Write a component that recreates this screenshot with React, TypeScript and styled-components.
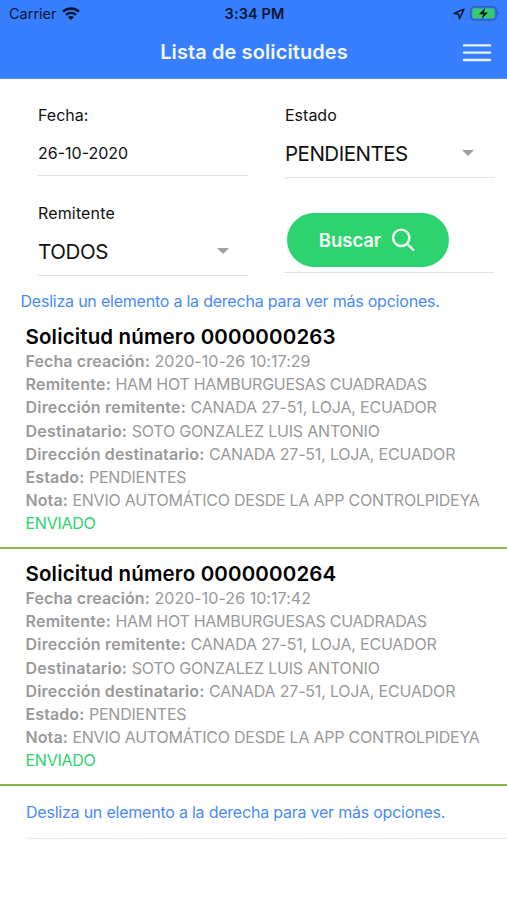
import React from "react";
import styled, { createGlobalStyle } from "styled-components";

const GlobalStyle = createGlobalStyle`
  * { box-sizing: border-box; }
  body { margin: 0; background: #fff; color: #111; font-family: Inter, "Liberation Sans", sans-serif; }
`;

const Screen = styled.main`
  width: 507px;
  height: 900px;
  overflow: hidden;
  background: #fff;
`;

const Header = styled.header`
  height: 79px;
  background: #387fff;
  border-bottom: 1px solid #4e8eff;
`;

const StatusBar = styled.div`
  height: 27px;
  display: grid;
  grid-template-columns: 1fr auto 1fr;
  align-items: center;
  padding: 0 7px 0 9px;
  color: #071430;
  svg { display: block; }
`;

const StatusGroup = styled.div<{ $end?: boolean }>`
  display: flex;
  align-items: center;
  justify-content: ${(p) => (p.$end ? "flex-end" : "flex-start")};
  gap: 5px;
`;

const Txt = styled.span<{ $size: number; $weight?: number; $space?: number; $color?: string }>`
  font-size: ${(p) => p.$size}px;
  font-weight: ${(p) => p.$weight ?? 400};
  letter-spacing: ${(p) => p.$space ?? 0}px;
  color: ${(p) => p.$color ?? "inherit"};
  white-space: nowrap;
`;

const NavBar = styled.div`
  height: 50px;
  display: grid;
  grid-template-columns: 46px 1fr 44px;
  align-items: center;
  text-align: center;
  color: #f4f8ff;
  padding-right: 1px;
`;

const MenuButton = styled.button`
  border: 0;
  padding: 0;
  background: none;
  height: 20px;
  svg { display: block; }
`;

const Filters = styled.form`
  display: grid;
  grid-template-columns: 211px 210px;
  column-gap: 36px;
  padding: 23px 13px 0 37px;
  height: 210px;
  grid-template-rows: 98px 98px;
`;

const Field = styled.div<{ $height: number }>`
  height: ${(p) => p.$height}px;
  border-bottom: 1px solid #e2e2e2;
  padding-left: 1px;
`;

const FieldLabel = styled.label`
  display: block;
  height: 27px;
  line-height: 27px;
`;

const FieldValue = styled.div<{ $end?: number }>`
  height: 48px;
  display: flex;
  align-items: center;
  justify-content: space-between;
  padding-right: ${(p) => p.$end ?? 19}px;
`;

const Caret = styled.i`
  border: 6px solid transparent;
  border-top-color: #a0a0a0;
  border-bottom: 0;
`;

const ButtonField = styled.div`
  height: 73px;
  border-bottom: 1px solid #e2e2e2;
  padding: 12.5px 0 0 3px;
`;

const SearchButton = styled.button`
  display: flex;
  align-items: center;
  justify-content: center;
  gap: 10px;
  width: 162px;
  height: 54.5px;
  border: 0;
  border-radius: 28px;
  padding: 0 2px 0 0;
  background: #2dd36f;
  color: #f5fff8;
  font-family: inherit;
`;

const Hint = styled.p<{ $indent: number }>`
  margin: 0;
  padding-left: ${(p) => p.$indent}px;
  height: 23px;
  line-height: 25px;
  color: #4a8af4;
`;

const Item = styled.article`
  height: 237px;
  padding: 10px 0 0 25.5px;
  border-bottom: 2px solid #82b84e;
`;

const ItemTitle = styled.h2`
  margin: 0;
  height: 28px;
  line-height: 27px;
  color: #000;
`;

const Detail = styled.div`
  height: 23.2px;
  line-height: 23.2px;
  color: #999;
  white-space: nowrap;
  font-size: 16px;
`;

const Footer = styled.footer`
  margin-left: 26px;
  padding-top: 14px;
  height: 53px;
  border-bottom: 1px solid #ebebeb;
`;

type Entry = { label: string; value: string; tracking: number; labelTracking?: number };

const details: Entry[] = [
  { label: "Remitente:", value: "HAM HOT HAMBURGUESAS CUADRADAS", tracking: -0.27, labelTracking: 0.24 },
  { label: "Dirección remitente:", value: "CANADA 27-51, LOJA, ECUADOR", tracking: -0.19 },
  { label: "Destinatario:", value: "SOTO GONZALEZ LUIS ANTONIO", tracking: -0.19 },
  { label: "Dirección destinatario:", value: "CANADA 27-51, LOJA, ECUADOR", tracking: -0.19, labelTracking: 0.17 },
  { label: "Estado:", value: "PENDIENTES", tracking: -0.22, labelTracking: 0.1 },
  { label: "Nota:", value: "ENVIO AUTOMÁTICO DESDE LA APP CONTROLPIDEYA", tracking: -0.24, labelTracking: 0.1 },
];

const requests = [
  { id: "0000000263", created: "2020-10-26 10:17:29" },
  { id: "0000000264", created: "2020-10-26 10:17:42" },
];

const HINT = "Desliza un elemento a la derecha para ver más opciones.";

function DetailRow({ label, value, tracking, labelTracking = 0.2 }: Entry) {
  return (
    <Detail>
      <Txt $size={16} $weight={600} $space={labelTracking}>{label}</Txt>{" "}
      <Txt $size={16} $space={tracking}>{value}</Txt>
    </Detail>
  );
}

const WifiIcon = () => (
  <svg width="18" height="14" viewBox="0 0 18 14" fill="none" stroke="currentColor" strokeWidth="2.6">
    <path d="M1 4.6C5.6.4 12.4.4 17 4.6" />
    <path d="M4 7.9c2.9-2.6 7.1-2.6 10 0" />
    <path d="M9 13.1 6 10.3c1.8-1.6 4.2-1.6 6 0z" fill="currentColor" stroke="none" />
  </svg>
);

const LocationIcon = () => (
  <svg width="12" height="12" viewBox="0 0 12 12" fill="none" stroke="currentColor" strokeWidth="1.5" strokeLinejoin="round">
    <path d="M11 1.2 1 5.4l4.6.8.9 4.5z" />
  </svg>
);

const BatteryIcon = () => (
  <svg width="30" height="15" viewBox="0 0 30 15">
    <rect x=".8" y=".8" width="25.4" height="13" rx="3.6" fill="none" stroke="#285bb0" strokeWidth="1.2" />
    <rect x="2.4" y="2.4" width="22.2" height="9.8" rx="2" fill="#36cc69" />
    <path d="M27.6 5.2c1.8.7 1.8 3.5 0 4.2z" fill="#285bb0" />
    <path d="M15.2 1.8 9 8.2h4L11.8 13 18 6.5h-4z" fill="#071430" />
  </svg>
);

const MenuIcon = () => (
  <svg width="30" height="20" viewBox="0 0 30 20" stroke="#e9f3ff" strokeWidth="2.4" strokeLinecap="round">
    <path d="M2 3.4h26M2 10.6h26M2 18h26" />
  </svg>
);

const SearchIcon = () => (
  <svg width="24" height="24" viewBox="0 0 24 24" fill="none" stroke="currentColor" strokeWidth="2.4" strokeLinecap="round">
    <circle cx="10.2" cy="9.8" r="8.2" />
    <path d="m16.4 16 5.8 5.8" />
  </svg>
);

export default function App() {
  return (
    <Screen>
      <GlobalStyle />
      <Header>
        <StatusBar>
          <StatusGroup>
            <Txt $size={14.5}>Carrier</Txt>
            <WifiIcon />
          </StatusGroup>
          <Txt $size={14.5} $weight={600} $space={0.1}>3:34 PM</Txt>
          <StatusGroup $end>
            <LocationIcon />
            <BatteryIcon />
          </StatusGroup>
        </StatusBar>
        <NavBar>
          <span />
          <Txt $size={20} $weight={600} $space={0.1}>Lista de solicitudes</Txt>
          <MenuButton type="button" aria-label="Menú"><MenuIcon /></MenuButton>
        </NavBar>
      </Header>
      <Filters>
        <Field $height={74}>
          <FieldLabel><Txt $size={16}>Fecha:</Txt></FieldLabel>
          <FieldValue><Txt $size={16}>26-10-2020</Txt></FieldValue>
        </Field>
        <Field $height={76}>
          <FieldLabel><Txt $size={16}>Estado</Txt></FieldLabel>
          <FieldValue $end={20}><Txt $size={20.5} $space={-0.5}>PENDIENTES</Txt><Caret /></FieldValue>
        </Field>
        <Field $height={76}>
          <FieldLabel><Txt $size={16} $space={0.15}>Remitente</Txt></FieldLabel>
          <FieldValue><Txt $size={20.5} $space={-0.35}>TODOS</Txt><Caret /></FieldValue>
        </Field>
        <ButtonField>
          <SearchButton type="button">
            <Txt $size={18.5} $weight={600} $space={-0.05}>Buscar</Txt>
            <SearchIcon />
          </SearchButton>
        </ButtonField>
      </Filters>
      <Hint $indent={20.5}><Txt $size={16} $space={-0.22}>{HINT}</Txt></Hint>
      <section>
        {requests.map((r) => (
          <Item key={r.id}>
            <ItemTitle><Txt $size={20.5} $weight={600} $space={0.15}>Solicitud número {r.id}</Txt></ItemTitle>
            <DetailRow label="Fecha creación:" value={r.created} tracking={0.05} labelTracking={0.1} />
            {details.map((d) => <DetailRow key={d.label} {...d} />)}
            <Detail><Txt $size={16} $space={-0.25} $color="#2dd36f">ENVIADO</Txt></Detail>
          </Item>
        ))}
      </section>
      <Footer><Hint $indent={0}><Txt $size={16} $space={-0.22}>{HINT}</Txt></Hint></Footer>
    </Screen>
  );
}
